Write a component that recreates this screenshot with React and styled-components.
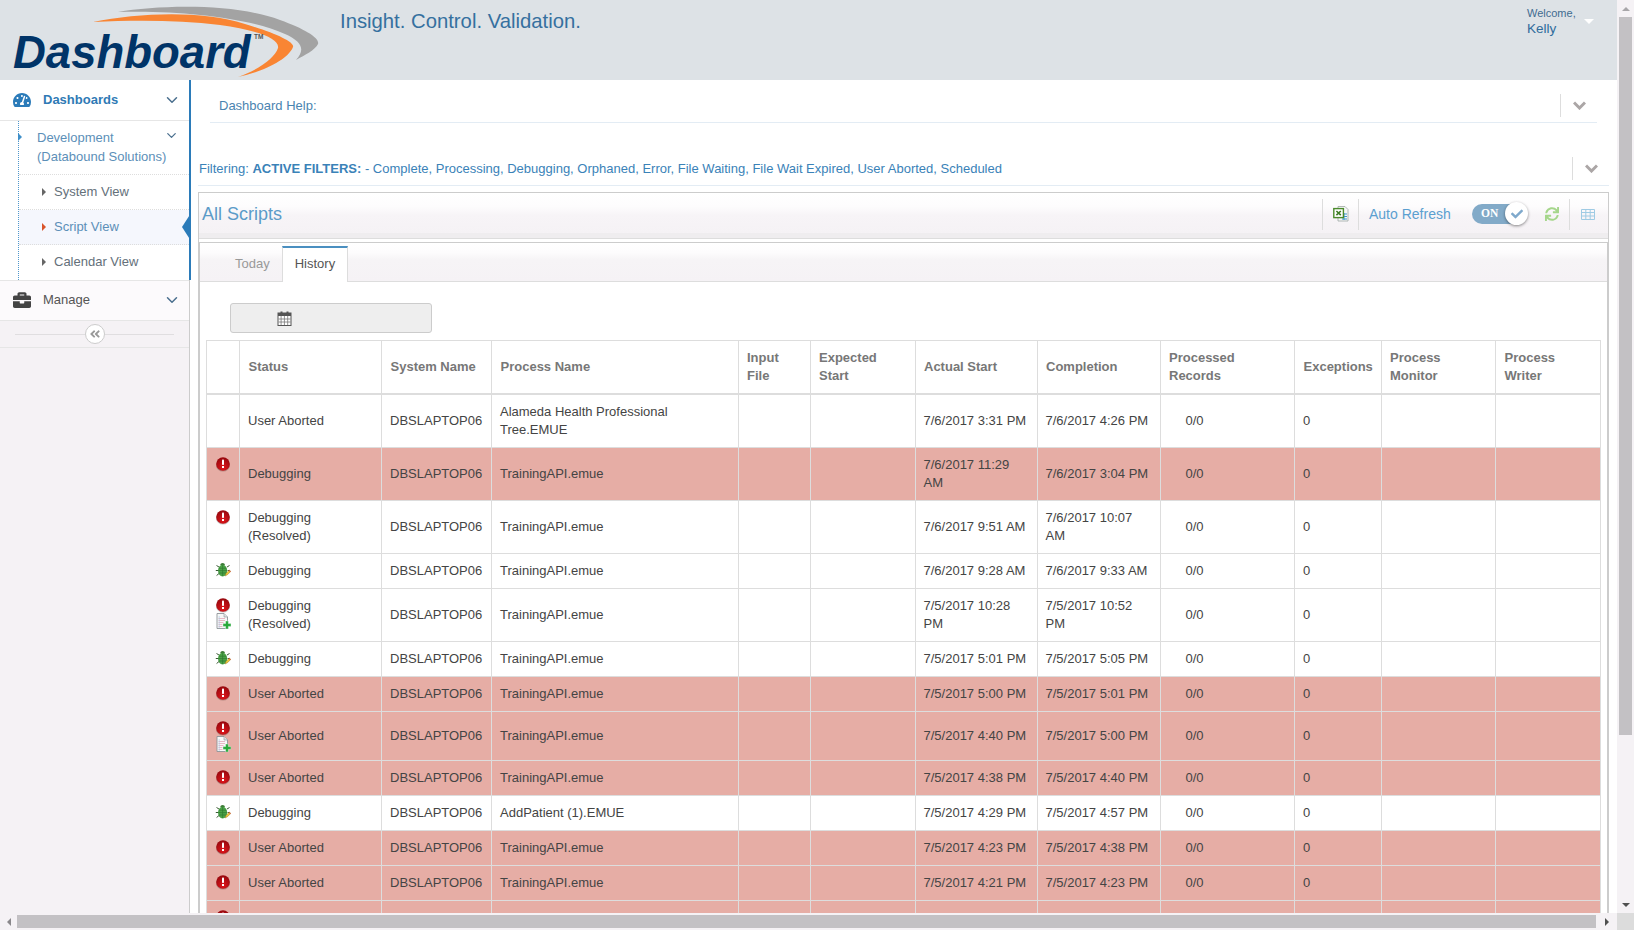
import React from 'react';
import styled, { createGlobalStyle } from 'styled-components';
import {
  FaTachometerAlt,
  FaBriefcase,
  FaSync,
  FaCheck,
  FaAngleDoubleLeft,
} from 'react-icons/fa';
import { LuChevronDown } from 'react-icons/lu';

const GlobalStyle = createGlobalStyle`
  html, body, #root {
    margin: 0;
    height: 100%;
    overflow: hidden;
  }
  body {
    font-family: "Liberation Sans", Arial, sans-serif;
    font-size: 13px;
    line-height: 18px;
    color: #444;
    background: #fff;
  }
`;

const filters =
  'Complete, Processing, Debugging, Orphaned, Error, File Waiting, File Wait Expired, User Aborted, Scheduled';

const columnWidths = [33, 142, 110, 246.5, 72, 105, 122, 123, 134.5, 86.5, 114.5, 105];

const headings = [
  '',
  'Status',
  'System Name',
  'Process Name',
  'Input File',
  'Expected Start',
  'Actual Start',
  'Completion',
  'Processed Records',
  'Exceptions',
  'Process Monitor',
  'Process Writer',
];

const TRAINING = 'TrainingAPI.emue';

const rows = [
  { icons: [], status: 'User Aborted', process: 'Alameda Health Professional Tree.EMUE', start: '7/6/2017 3:31 PM', end: '7/6/2017 4:26 PM' },
  { icons: ['error'], red: true, status: 'Debugging', process: TRAINING, start: '7/6/2017 11:29 AM', end: '7/6/2017 3:04 PM' },
  { icons: ['error'], status: 'Debugging (Resolved)', process: TRAINING, start: '7/6/2017 9:51 AM', end: '7/6/2017 10:07 AM' },
  { icons: ['bug'], status: 'Debugging', process: TRAINING, start: '7/6/2017 9:28 AM', end: '7/6/2017 9:33 AM' },
  { icons: ['error', 'doc'], status: 'Debugging (Resolved)', process: TRAINING, start: '7/5/2017 10:28 PM', end: '7/5/2017 10:52 PM' },
  { icons: ['bug'], status: 'Debugging', process: TRAINING, start: '7/5/2017 5:01 PM', end: '7/5/2017 5:05 PM' },
  { icons: ['error'], red: true, status: 'User Aborted', process: TRAINING, start: '7/5/2017 5:00 PM', end: '7/5/2017 5:01 PM' },
  { icons: ['error', 'doc'], red: true, status: 'User Aborted', process: TRAINING, start: '7/5/2017 4:40 PM', end: '7/5/2017 5:00 PM' },
  { icons: ['error'], red: true, status: 'User Aborted', process: TRAINING, start: '7/5/2017 4:38 PM', end: '7/5/2017 4:40 PM' },
  { icons: ['bug'], status: 'Debugging', process: 'AddPatient (1).EMUE', start: '7/5/2017 4:29 PM', end: '7/5/2017 4:57 PM' },
  { icons: ['error'], red: true, status: 'User Aborted', process: TRAINING, start: '7/5/2017 4:23 PM', end: '7/5/2017 4:38 PM' },
  { icons: ['error'], red: true, status: 'User Aborted', process: TRAINING, start: '7/5/2017 4:21 PM', end: '7/5/2017 4:23 PM' },
];

/* page frame with the two scrollbars */
const Frame = styled.div`
  display: grid;
  grid-template-columns: 1fr 17px;
  grid-template-rows: 1fr 17px;
  width: 100vw;
  height: 100vh;
  overflow: hidden;
`;

const Viewport = styled.div`
  display: flex;
  flex-direction: column;
  min-width: 0;
  min-height: 0;
  overflow: hidden;
`;

const VTrack = styled.div`
  display: flex;
  flex-direction: column;
  align-items: center;
  background: #f5f2f5;
`;

const VThumb = styled.div`
  width: 13px;
  height: 718px;
  background: #c3c1c4;
`;

const VSpacer = styled.div`
  flex: 1;
`;

const HTrack = styled.div`
  display: flex;
  align-items: center;
  background: #f5f2f5;
`;

const HThumb = styled.div`
  flex: 1;
  height: 13px;
  background: #c3c1c4;
`;

const ScrollButton = styled.div`
  display: flex;
  align-items: center;
  justify-content: center;
  flex: none;
  width: ${(p) => p.$width || 17}px;
  height: 17px;
`;

const Arrow = styled.span`
  display: block;
  flex: none;
  width: 0;
  height: 0;
  border-style: solid;
  border-color: transparent;
  ${({ $dir, $color, $size = 4 }) => {
    if ($dir === 'up') return `border-width: 0 ${$size}px ${$size}px; border-bottom-color: ${$color};`;
    if ($dir === 'down') return `border-width: ${$size}px ${$size}px 0; border-top-color: ${$color};`;
    if ($dir === 'left') return `border-width: ${$size}px ${$size}px ${$size}px 0; border-right-color: ${$color};`;
    return `border-width: ${$size}px 0 ${$size}px ${$size}px; border-left-color: ${$color};`;
  }}
`;

const Corner = styled.div`
  background: #dcdcdc;
`;

/* top banner */
const Header = styled.header`
  display: flex;
  flex: none;
  height: 80px;
  background: #dde2e6;
`;

const LogoSvg = styled.svg`
  flex: none;
  display: block;
  width: 320px;
  height: 80px;
`;

const Tagline = styled.div`
  margin: 10px 0 0 20px;
  font-size: 20.3px;
  line-height: 22px;
  color: #35709f;
`;

const Welcome = styled.div`
  display: flex;
  flex: none;
  width: 90px;
  margin-left: auto;
  padding-top: 7px;
`;

const WelcomeText = styled.div`
  font-size: 11px;
  line-height: 13px;
  color: #3f6b90;
  width: 57px;
`;

const WelcomeName = styled.div`
  padding-top: 1px;
  font-size: 13.5px;
  line-height: 16px;
  color: #2f6c9c;
`;

const WelcomeCaret = styled.div`
  margin-top: 12px;
`;

/* sidebar */
const Body = styled.div`
  display: flex;
  flex: 1;
  min-height: 0;
`;

const Sidebar = styled.aside`
  flex: none;
  box-sizing: border-box;
  width: 190px;
  background: #f5f2f5;
  border-right: 1px solid #ccc;
`;

const NavGroup = styled.div`
  margin-right: -2px;
  border-right: 2px solid #2b7bb9;
  background: #fff;
`;

const NavRow = styled.div`
  display: flex;
  align-items: center;
  box-sizing: border-box;
  height: 41px;
  padding: 0 8px ${(p) => (p.$top ? 2 : 0)}px 13px;
  background: ${(p) => (p.$top ? '#fcfafc' : '#fff')};
  border-bottom: 1px solid #e6e6e6;
  border-top: ${(p) => (p.$top ? '1px solid #e6e6e6' : 'none')};
  font-weight: ${(p) => (p.$active ? 'bold' : 'normal')};
  color: ${(p) => (p.$active ? '#2f7ab5' : '#555')};
`;

const NavIcon = styled.span`
  display: flex;
  width: 30px;
  font-size: 18px;
  color: ${(p) => p.$color};
`;

const NavLabel = styled.span`
  flex: 1 1 0;
  min-width: 0;
  white-space: nowrap;
`;

const NavChevron = styled(LuChevronDown)`
  flex: none;
  font-size: ${(p) => p.$size || 18}px;
  color: #4a6f8e;
`;

const SubTree = styled.div`
  margin-left: 18px;
  border-left: 1px dotted #4f97cc;
`;

const BranchRow = styled.div`
  position: relative;
  display: flex;
  box-sizing: border-box;
  height: 54px;
  padding: 7px 10px 0 18px;
  border-bottom: 1px dotted #ddd;
  color: #5c8fb8;
  line-height: 19px;
`;

const BranchCaret = styled.span`
  position: absolute;
  left: -1px;
  top: 12px;
`;

const SubRow = styled.div`
  position: relative;
  display: flex;
  align-items: center;
  gap: 8px;
  box-sizing: border-box;
  height: 35px;
  padding: 0 0 ${(p) => (p.$last ? 1 : 0)}px 23px;
  background: ${(p) => (p.$current ? '#f5f7fd' : '#fff')};
  border-bottom: ${(p) => (p.$last ? 'none' : '1px dotted #ddd')};
  color: ${(p) => (p.$current ? '#5c8fb8' : '#64707a')};
`;

const CurrentNotch = styled.span`
  position: absolute;
  right: -2px;
  top: 3px;
  width: 0;
  height: 0;
  border-style: solid;
  border-width: 14px 9px 14px 0;
  border-color: transparent #2b7bb9 transparent transparent;
`;

const Collapse = styled.div`
  display: flex;
  align-items: center;
  box-sizing: border-box;
  height: 27px;
  padding: 0 15px;
  border-bottom: 1px solid #e6e6e6;
`;

const CollapseLine = styled.span`
  flex: 1;
  height: 1px;
  background: #e0dee0;
`;

const CollapseButton = styled.span`
  display: flex;
  align-items: center;
  justify-content: center;
  box-sizing: border-box;
  width: 20px;
  height: 20px;
  background: #fff;
  border: 1px solid #ccc;
  border-radius: 50%;
  font-size: 12px;
  color: #999;
`;

/* main column */
const Main = styled.main`
  flex: 1;
  min-width: 0;
  padding: 0 8px;
`;

const FoldRow = styled.div`
  display: flex;
  align-items: center;
  padding: ${(p) => (p.$help ? '14px 0 5px' : '0 0 5px')};
  margin: ${(p) => (p.$help ? '0 12px' : '34px 0 6px')};
  border-bottom: 1px solid #e3ecf4;
`;

const FoldText = styled.div`
  flex: 1;
  padding-left: ${(p) => (p.$help ? 9 : 1)}px;
  color: ${(p) => (p.$help ? '#4a84b0' : '#3a82b8')};
  white-space: nowrap;
`;

const FoldToggle = styled.div`
  display: flex;
  align-items: center;
  justify-content: center;
  flex: none;
  width: 36px;
  height: 23px;
  margin-left: auto;
  border-left: 1px solid #ddd;
`;

const FoldChevronSvg = styled.svg`
  display: block;
  width: 13px;
  height: 9px;
  fill: none;
  stroke: #aba6a6;
  stroke-width: 3;
`;

const Panel = styled.section`
  border: 1px solid #ccc;
  border-bottom: none;
`;

const PanelHead = styled.div`
  display: flex;
  align-items: center;
  box-sizing: border-box;
  height: 46px;
  background: linear-gradient(#fff 0, #fdfcfd 30%, #f7f4f7 50%, #f5f2f5 90%, #efedef 90%);
  border-bottom: 1px solid #ddd;
`;

const PanelTitle = styled.h2`
  flex: 1;
  margin: 0 0 3px 3px;
  font-size: 18px;
  line-height: 24px;
  font-weight: normal;
  color: #5b9bc8;
`;

const Tool = styled.div`
  display: flex;
  align-items: center;
  justify-content: ${(p) => (p.$start ? 'flex-start' : 'center')};
  box-sizing: border-box;
  flex: none;
  height: 31px;
  margin-bottom: 3px;
  width: ${(p) => p.$width}px;
  padding: 0 ${(p) => p.$padRight || 0}px 0 ${(p) => p.$padLeft || 0}px;
  border-left: ${(p) => (p.$divided ? '1px solid #ddd' : 'none')};
  font-size: 14px;
  color: ${(p) => p.$color || '#5b9fd0'};
`;

const Toggle = styled.div`
  position: relative;
  display: flex;
  align-items: center;
  box-sizing: border-box;
  flex: none;
  width: 53px;
  height: 20px;
  margin: 0 4px 3px 20px;
  padding: 0 0 3px 9px;
  background: #82aac8;
  border-radius: 10px;
  font: bold 11.5px "Liberation Serif", serif;
  color: #fff;
`;

const ToggleKnob = styled.span`
  position: absolute;
  right: -3px;
  top: -2px;
  display: flex;
  align-items: center;
  justify-content: center;
  width: 23px;
  height: 23px;
  background: #fff;
  border-radius: 50%;
  box-shadow: 0 1px 3px rgba(0, 0, 0, 0.45);
  font-size: 12px;
  color: #7fa9cc;
`;

const TabBox = styled.div`
  margin-top: 3px;
  border: 1px solid #ccc;
  border-width: 1px 1px 0;
`;

const TabStrip = styled.div`
  display: flex;
  align-items: flex-end;
  box-sizing: border-box;
  height: 39px;
  padding-left: 21px;
  background: linear-gradient(#fff 0, #fdfcfd 25%, #f6f4f6 45%, #f5f2f5 100%);
  border-bottom: 1px solid #ddd;
`;

const Tab = styled.div`
  box-sizing: border-box;
  height: ${(p) => (p.$active ? 36 : 35)}px;
  margin-bottom: ${(p) => (p.$active ? -1 : 0)}px;
  padding: ${(p) => (p.$active ? '7px 12px 0' : '6px 11px 0 13px')};
  background: ${(p) => (p.$active ? '#fff' : 'transparent')};
  border-top: ${(p) => (p.$active ? '2px solid #4a8fc0' : '3px solid transparent')};
  border-left: 1px solid ${(p) => (p.$active ? '#ddd' : 'transparent')};
  border-right: 1px solid ${(p) => (p.$active ? '#ddd' : 'transparent')};
  color: ${(p) => (p.$active ? '#555' : '#999')};
`;

const TabBody = styled.div`
  padding: 21px 0 0 6px;
`;

const DateButton = styled.div`
  display: flex;
  align-items: center;
  justify-content: center;
  box-sizing: border-box;
  width: 202px;
  height: 30px;
  margin: 0 0 7px 24px;
  padding-right: 94px;
  background: #eee;
  border: 1px solid #ccc;
  border-radius: 3px;
`;

const Grid = styled.table`
  width: 1394px;
  table-layout: fixed;
  border-collapse: collapse;
`;

const GridCol = styled.col`
  width: ${(p) => p.$width}px;
`;

const HeadCell = styled.th`
  box-sizing: border-box;
  padding: 8px;
  padding-left: 8.5px;
  text-align: left;
  vertical-align: middle;
  font-weight: bold;
  color: #777;
  border: 1px solid #ddd;
  border-bottom-width: 2px;
`;

const Row = styled.tr`
  background: ${(p) => (p.$red ? '#e6ada5' : '#fff')};
`;

const Cell = styled.td`
  padding: 8px;
  padding-left: ${(p) => p.$inset || 8}px;
  vertical-align: ${(p) => (p.$top ? 'top' : 'middle')};
  border: 1px solid #ddd;
  color: #444;
`;

const IconStack = styled.div`
  display: flex;
  flex-direction: column;
  align-items: center;
`;

const Glyph = styled.svg`
  display: block;
  flex: none;
  width: ${(p) => p.$size || 16}px;
  height: ${(p) => p.$size || 16}px;
`;

function Logo() {
  return (
    <LogoSvg viewBox="0 0 320 80">
      <path
        d="M118 12C160 5 235 3 280 20C305 29 320 38 318 44C315 50 305 55 296 60C305 50 303 42 285 34C250 18 180 10 118 12Z"
        fill="#a3a3a3"
      />
      <path
        d="M93 22C140 13 200 10 245 24C275 33 295 42 293 47C288 60 262 72 238 77C258 70 275 58 278 48C280 38 255 30 220 25C180 20 135 20 93 22Z"
        fill="#f98533"
      />
      <text
        x="13"
        y="68"
        fontFamily="'Liberation Sans', Arial, sans-serif"
        fontSize="45.5"
        fontWeight="bold"
        fontStyle="italic"
        fill="#003468"
      >
        Dashboard
      </text>
      <text
        x="254"
        y="39"
        fontFamily="'Liberation Sans', Arial, sans-serif"
        fontSize="6.5"
        fontWeight="bold"
        fill="#555"
      >
        TM
      </text>
    </LogoSvg>
  );
}

function ErrorIcon() {
  return (
    <Glyph viewBox="0 0 16 16">
      <defs>
        <radialGradient id="errorFill" cx="50%" cy="75%" r="70%">
          <stop offset="0" stopColor="#e0161c" />
          <stop offset="1" stopColor="#98080e" />
        </radialGradient>
      </defs>
      <ellipse cx="8" cy="9" rx="7" ry="6.6" fill="#000" opacity="0.22" />
      <circle cx="8" cy="8" r="6.8" fill="url(#errorFill)" />
      <rect x="7" y="3.6" width="2" height="5.4" rx="0.8" fill="#fff" />
      <rect x="7" y="10" width="2" height="2" fill="#fff" />
    </Glyph>
  );
}

function BugIcon() {
  return (
    <Glyph viewBox="0 0 16 16">
      <g stroke="#26461f" strokeWidth="0.9" fill="none">
        <path d="M4 5L1.5 3.5M3.4 8.5H.8M4 11.5L1.6 13.5M12 5L14.5 3.5M12.6 8.5H15" />
      </g>
      <ellipse cx="7.6" cy="2.6" rx="2.2" ry="1.6" fill="#3c7a35" />
      <ellipse cx="7.6" cy="8.6" rx="4.6" ry="5.8" fill="#4ba247" />
      <path d="M4 6.2h7.2M3.2 8.6h8.8M3.8 11h7.6M7.6 3v11" stroke="#2e7a30" strokeWidth="0.7" fill="none" />
      <path d="M10 14l1-2.6 3.4-3.4 1.4 1.4-3.4 3.4z" fill="#f0c63c" stroke="#7c6414" strokeWidth="0.4" />
      <path d="M14.4 8l1.4 1.4-.7.7-1.4-1.4z" fill="#d9534f" />
    </Glyph>
  );
}

function DocAddIcon() {
  return (
    <Glyph viewBox="0 0 16 16">
      <path d="M2 .5H9L12.5 4v11.5H2z" fill="#f7f8f8" stroke="#8d9498" strokeWidth="0.9" />
      <path d="M9 .5V4h3.5" fill="#dfe3e5" stroke="#8d9498" strokeWidth="0.6" />
      <path d="M3.5 5.5h6.5M3.5 7.5h6.5M3.5 9.5h5M3.5 11.5h4M3.5 13.5h4" stroke="#e7b0c0" strokeWidth="0.9" />
      <path d="M4.2 3v12" stroke="#a9c8e6" strokeWidth="0.6" />
      <path d="M10.6 8h2.8v2.6H16v2.8h-2.6V16h-2.8v-2.6H8v-2.8h2.6z" fill="#27a83a" stroke="#fff" strokeWidth="0.4" />
    </Glyph>
  );
}

function ExcelIcon() {
  return (
    <Glyph viewBox="0 0 16 16">
      <path d="M5 .5h7l3 3v11.5H5z" fill="#f5f7f7" stroke="#9fa7a5" strokeWidth="0.8" />
      <path d="M9 8h5M9 10.5h5M9 13h5M11 7v7" stroke="#3f98cf" strokeWidth="1" />
      <rect x=".8" y="2.6" width="9.6" height="9" fill="#fff" stroke="#4b8a2c" strokeWidth="1.4" />
      <path d="M3.4 5l4.4 4.2M7.8 5L3.4 9.2" stroke="#3d7c25" strokeWidth="1.6" />
    </Glyph>
  );
}

function CalendarIcon() {
  return (
    <Glyph viewBox="0 0 14 15" $size={15}>
      <rect x="0.5" y="2" width="13" height="12.5" fill="#fff" stroke="#555" />
      <rect x="0.5" y="2" width="13" height="3" fill="#555" />
      <rect x="3" y="0.5" width="2" height="3.5" fill="#555" />
      <rect x="9" y="0.5" width="2" height="3.5" fill="#555" />
      <path d="M3.6 5v9M6.9 5v9M10.2 5v9M1 8h12M1 11h12" stroke="#777" strokeWidth="0.8" />
    </Glyph>
  );
}

function TableGridIcon() {
  return (
    <Glyph viewBox="0 0 14 14" $size={14}>
      <path
        d="M.5 2.5h13v10H.5zM.5 5.5h13M.5 9h13M4.8 2.5v10M9.2 2.5v10"
        fill="none"
        stroke="#9fcbe4"
        strokeWidth="1"
      />
    </Glyph>
  );
}

function FoldChevron() {
  return (
    <FoldChevronSvg viewBox="0 0 13 9">
      <polyline points="1,1.5 6.5,7 12,1.5" />
    </FoldChevronSvg>
  );
}

const statusIcons = { error: ErrorIcon, bug: BugIcon, doc: DocAddIcon };

function StatusIcons({ icons }) {
  return (
    <IconStack>
      {icons.map((name) => {
        const Icon = statusIcons[name];
        return <Icon key={name} />;
      })}
    </IconStack>
  );
}

function ScriptRow({ row }) {
  return (
    <Row $red={row.red}>
      <Cell $top>
        <StatusIcons icons={row.icons} />
      </Cell>
      <Cell>{row.status}</Cell>
      <Cell>DBSLAPTOP06</Cell>
      <Cell>{row.process}</Cell>
      <Cell />
      <Cell />
      <Cell>{row.start}</Cell>
      <Cell>{row.end}</Cell>
      <Cell $inset={25}>0/0</Cell>
      <Cell>0</Cell>
      <Cell />
      <Cell />
    </Row>
  );
}

function Nav() {
  return (
    <Sidebar>
      <NavGroup>
        <NavRow $active>
          <NavIcon $color="#2b7bb9">
            <FaTachometerAlt />
          </NavIcon>
          <NavLabel>Dashboards</NavLabel>
          <NavChevron />
        </NavRow>
        <SubTree>
          <BranchRow>
            <BranchCaret>
              <Arrow $dir="right" $color="#3f8fc9" />
            </BranchCaret>
            <NavLabel>
              Development
              <br />
              (Databound Solutions)
            </NavLabel>
            <NavChevron $size={15} />
          </BranchRow>
          <SubRow>
            <Arrow $dir="right" $color="#666" />
            System View
          </SubRow>
          <SubRow $current>
            <Arrow $dir="right" $color="#d9552b" />
            Script View
            <CurrentNotch />
          </SubRow>
          <SubRow $last>
            <Arrow $dir="right" $color="#666" />
            Calendar View
          </SubRow>
        </SubTree>
      </NavGroup>
      <NavRow $top>
        <NavIcon $color="#444">
          <FaBriefcase />
        </NavIcon>
        <NavLabel>Manage</NavLabel>
        <NavChevron />
      </NavRow>
      <Collapse>
        <CollapseLine />
        <CollapseButton>
          <FaAngleDoubleLeft />
        </CollapseButton>
        <CollapseLine />
      </Collapse>
    </Sidebar>
  );
}

export default function App() {
  return (
    <>
      <GlobalStyle />
      <Frame>
        <Viewport>
          <Header>
            <Logo />
            <Tagline>Insight. Control. Validation.</Tagline>
            <Welcome>
              <WelcomeText>
                Welcome,
                <WelcomeName>Kelly</WelcomeName>
              </WelcomeText>
              <WelcomeCaret>
                <Arrow $dir="down" $color="#fff" $size={5} />
              </WelcomeCaret>
            </Welcome>
          </Header>
          <Body>
            <Nav />
            <Main>
              <FoldRow $help>
                <FoldText $help>Dashboard Help:</FoldText>
                <FoldToggle>
                  <FoldChevron />
                </FoldToggle>
              </FoldRow>
              <FoldRow>
                <FoldText>
                  Filtering: <b>ACTIVE FILTERS:</b> - {filters}
                </FoldText>
                <FoldToggle>
                  <FoldChevron />
                </FoldToggle>
              </FoldRow>
              <Panel>
                <PanelHead>
                  <PanelTitle>All Scripts</PanelTitle>
                  <Tool $divided $width={36}>
                    <ExcelIcon />
                  </Tool>
                  <Tool $divided $start $width={94} $padLeft={10}>Auto Refresh</Tool>
                  <Toggle>
                    ON
                    <ToggleKnob>
                      <FaCheck />
                    </ToggleKnob>
                  </Toggle>
                  <Tool $width={40} $padLeft={6} $color="#a5d68b">
                    <FaSync />
                  </Tool>
                  <Tool $divided $width={39} $padRight={3}>
                    <TableGridIcon />
                  </Tool>
                </PanelHead>
                <TabBox>
                  <TabStrip>
                    <Tab>Today</Tab>
                    <Tab $active>History</Tab>
                  </TabStrip>
                  <TabBody>
                    <DateButton>
                      <CalendarIcon />
                    </DateButton>
                    <Grid>
                      <colgroup>
                        {columnWidths.map((w, i) => (
                          <GridCol key={i} $width={w} />
                        ))}
                      </colgroup>
                      <thead>
                        <tr>
                          {headings.map((h, i) => (
                            <HeadCell key={i}>{h}</HeadCell>
                          ))}
                        </tr>
                      </thead>
                      <tbody>
                        {rows.map((row) => (
                          <ScriptRow key={row.start + row.end} row={row} />
                        ))}
                        <Row $red>
                          <Cell $top>
                            <StatusIcons icons={['error']} />
                          </Cell>
                          {columnWidths.slice(1).map((w, i) => (
                            <Cell key={i} />
                          ))}
                        </Row>
                      </tbody>
                    </Grid>
                  </TabBody>
                </TabBox>
              </Panel>
            </Main>
          </Body>
        </Viewport>
        <VTrack>
          <ScrollButton>
            <Arrow $dir="up" $color="#a8a6a9" />
          </ScrollButton>
          <VThumb />
          <VSpacer />
          <ScrollButton>
            <Arrow $dir="down" $color="#505050" />
          </ScrollButton>
        </VTrack>
        <HTrack>
          <ScrollButton>
            <Arrow $dir="left" $color="#8a888b" />
          </ScrollButton>
          <HThumb />
          <ScrollButton $width={21}>
            <Arrow $dir="right" $color="#505050" />
          </ScrollButton>
        </HTrack>
        <Corner />
      </Frame>
    </>
  );
}
